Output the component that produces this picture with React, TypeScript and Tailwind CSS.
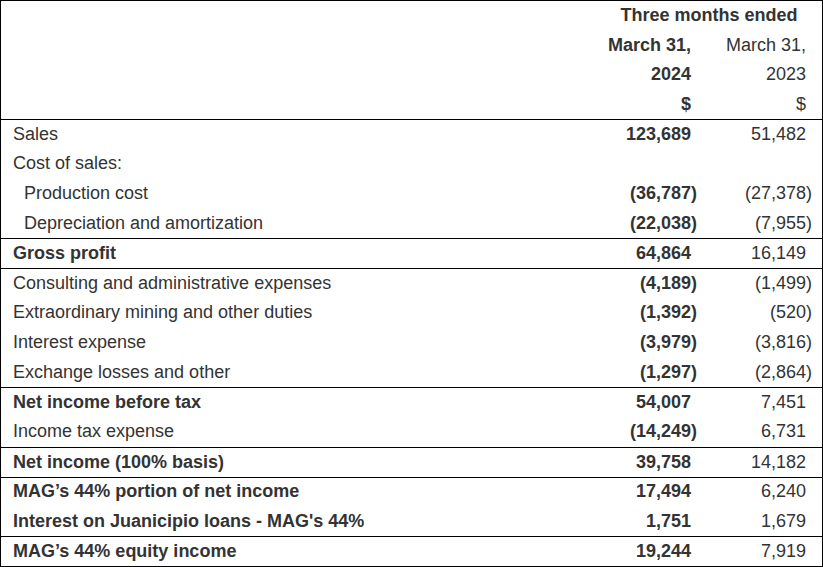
import React from 'react';

type Row = {
    label: string;
    a: string;
    b: string;
    bold?: boolean;
    indent?: boolean;
    line?: boolean;
};

const rows: Row[] = [
    { label: 'Sales', a: '123,689', b: '51,482', line: true },
    { label: 'Cost of sales:', a: '', b: '' },
    { label: 'Production cost', a: '(36,787)', b: '(27,378)', indent: true },
    { label: 'Depreciation and amortization', a: '(22,038)', b: '(7,955)', indent: true },
    { label: 'Gross profit', a: '64,864', b: '16,149', bold: true, line: true },
    { label: 'Consulting and administrative expenses', a: '(4,189)', b: '(1,499)', line: true },
    { label: 'Extraordinary mining and other duties', a: '(1,392)', b: '(520)' },
    { label: 'Interest expense', a: '(3,979)', b: '(3,816)' },
    { label: 'Exchange losses and other', a: '(1,297)', b: '(2,864)' },
    { label: 'Net income before tax', a: '54,007', b: '7,451', bold: true, line: true },
    { label: 'Income tax expense', a: '(14,249)', b: '6,731' },
    { label: 'Net income (100% basis)', a: '39,758', b: '14,182', bold: true, line: true },
    { label: 'MAG\u2019s 44% portion of net income', a: '17,494', b: '6,240', bold: true, line: true },
    { label: "Interest on Juanicipio loans - MAG's 44%", a: '1,751', b: '1,679', bold: true },
    { label: 'MAG\u2019s 44% equity income', a: '19,244', b: '7,919', bold: true, line: true },
];

// negative values: closing paren hangs past the digit column
const Num = ({ v }: { v: string }) => {
    if (v.endsWith(')')) {
        return (
            <span>
                {v.slice(0, -1)}
                <span className="inline-block w-0 overflow-visible">)</span>
            </span>
        );
    }
    return <span>{v}</span>;
};

const App: React.FC = () => {
    return (
        <div
            className="w-[823px] h-[567px] bg-white text-[18px] text-[#333333] border border-black"
            style={{ fontFamily: '"Liberation Sans", Arial, sans-serif' }}
        >
            {/* Header */}
            <div className="grid grid-cols-[1fr_111px_115px]">
                <div className="h-[29.5px]" />
                <div className="col-span-2 h-[29.5px] flex items-center justify-center font-bold">
                    Three months ended
                </div>
                <div className="h-[29.5px]" />
                <div className="h-[29.5px] flex items-center justify-end pr-4 font-bold">March 31,</div>
                <div className="h-[29.5px] flex items-center justify-end pr-4">March 31,</div>
                <div className="h-[29.5px]" />
                <div className="h-[29.5px] flex items-center justify-end pr-4 font-bold">2024</div>
                <div className="h-[29.5px] flex items-center justify-end pr-4">2023</div>
                <div className="h-[29.5px]" />
                <div className="h-[29.5px] flex items-center justify-end pr-4 font-bold">$</div>
                <div className="h-[29.5px] flex items-center justify-end pr-4">$</div>
            </div>

            {/* Body */}
            {rows.map((r, i) => (
                <div
                    key={i}
                    className={
                        'grid grid-cols-[1fr_111px_115px] h-[29.8px] items-center ' +
                        (r.line ? 'border-t border-black' : '')
                    }
                >
                    <div className={(r.indent ? 'pl-[23px] ' : 'pl-3 ') + (r.bold ? 'font-bold' : '')}>
                        {r.label}
                    </div>
                    <div className="text-right pr-4 font-bold">
                        <Num v={r.a} />
                    </div>
                    <div className="text-right pr-4">
                        <Num v={r.b} />
                    </div>
                </div>
            ))}
        </div>
    );
};

export default App;
